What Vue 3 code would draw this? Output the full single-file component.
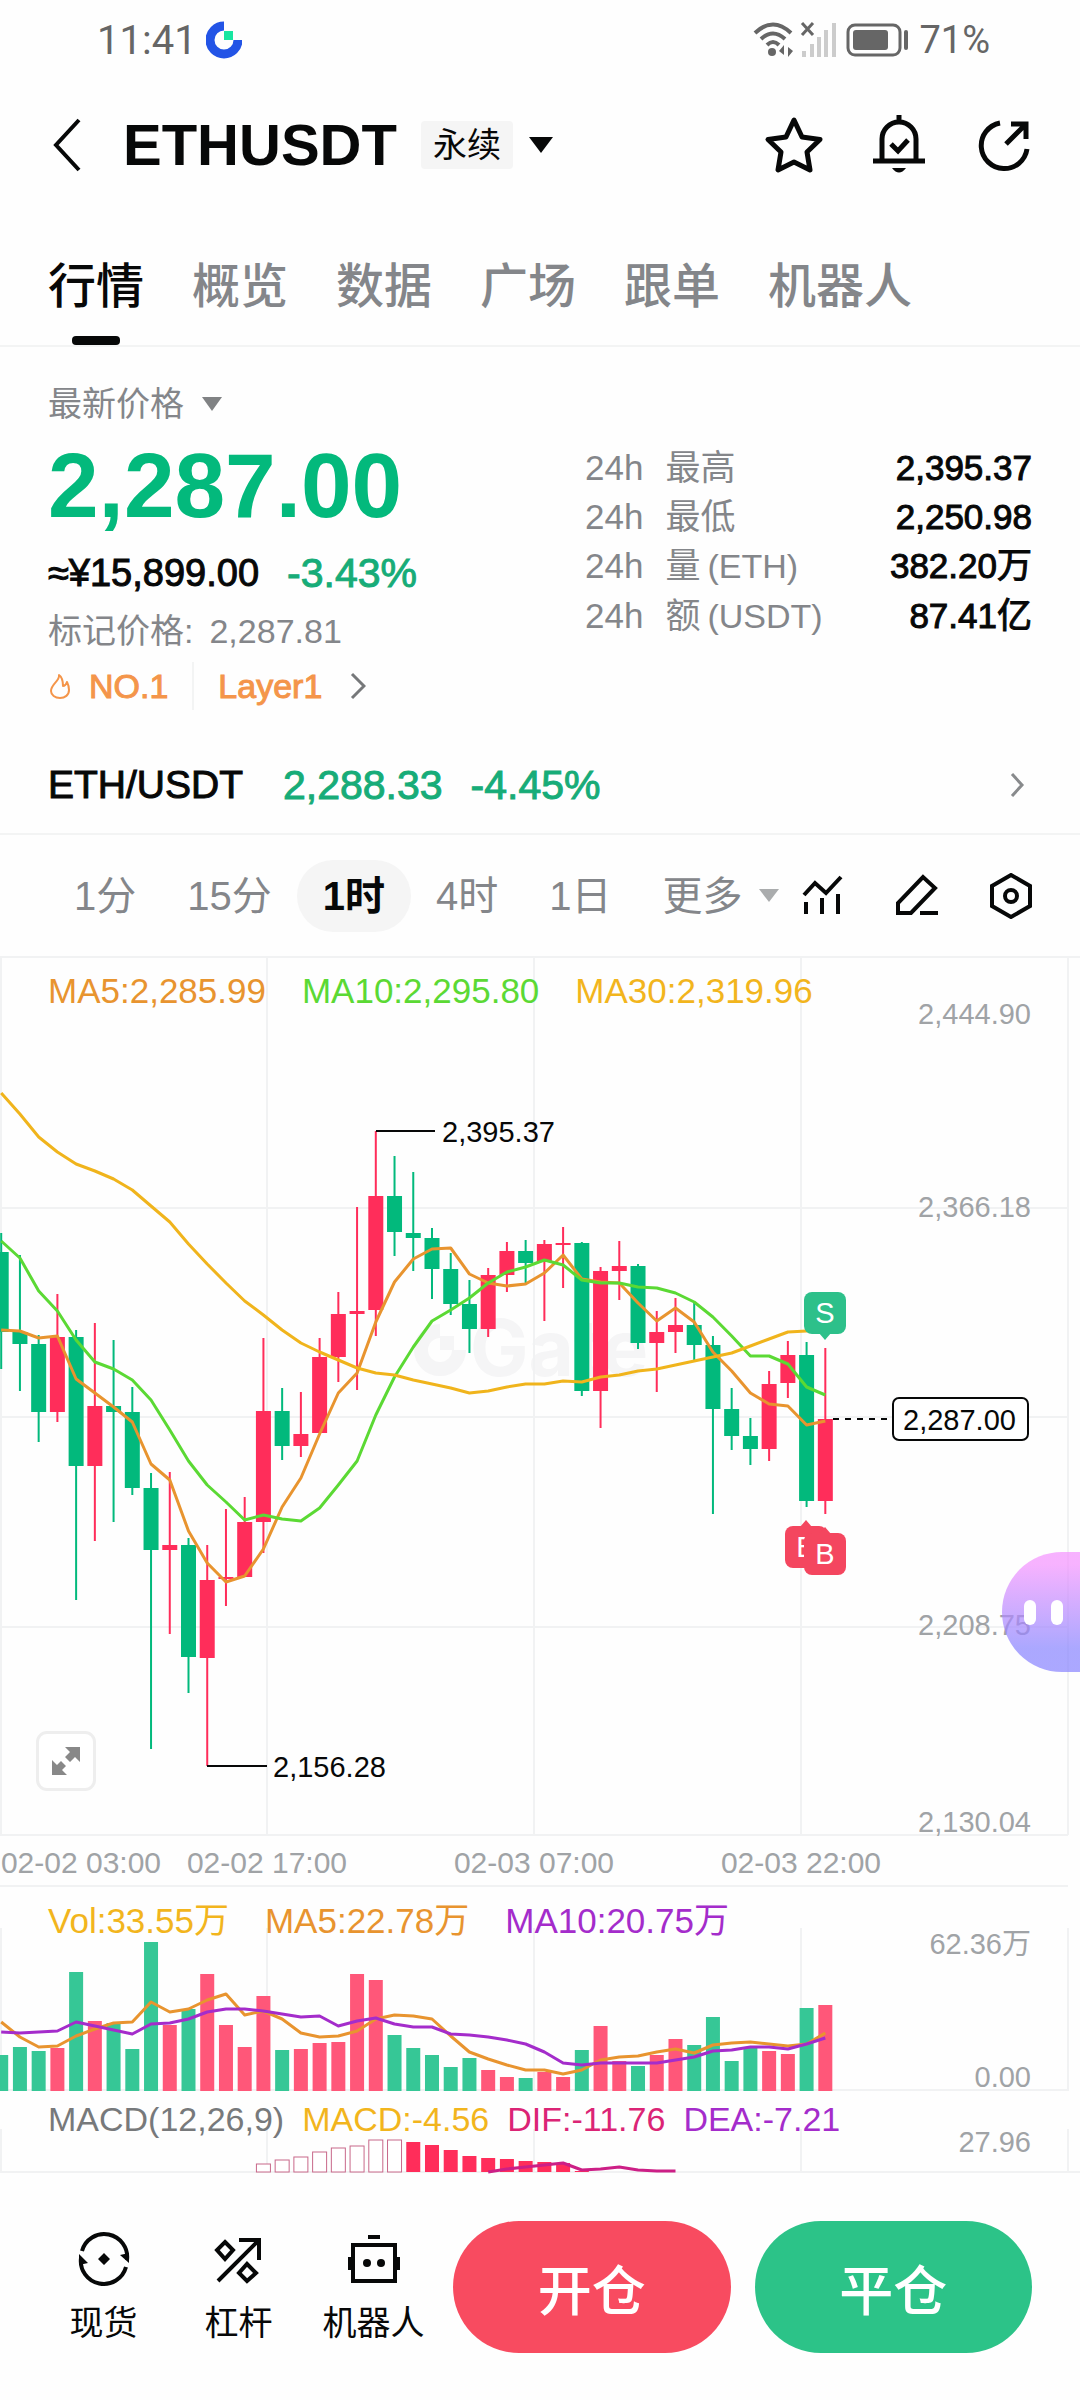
<script setup>
const tabs = ['行情', '概览', '数据', '广场', '跟单', '机器人']

const stats = [
  { name: '最高', unit: '', value: '2,395.37' },
  { name: '最低', unit: '', value: '2,250.98' },
  { name: '量', unit: '(ETH)', value: '382.20万' },
  { name: '额', unit: '(USDT)', value: '87.41亿' },
]

const periods = ['1分', '15分', '1时', '4时', '1日']

const STEP = 18.73
const cx = (i) => 1.2 + STEP * i
const toPoints = (values, first = 0) =>
  values.map((y, i) => `${cx(i + first).toFixed(1)},${y}`).join(' ')

// each candle: high, body top, body bottom, low, direction
const candles = [
  [277, 296, 376, 413, 'g'], [299, 376, 388, 435, 'g'], [379, 388, 456, 486, 'g'],
  [338, 381, 456, 466, 'r'], [374, 381, 510, 644, 'g'], [367, 450, 510, 585, 'r'],
  [384, 450, 456, 566, 'g'], [431, 456, 532, 539, 'g'], [517, 532, 594, 793, 'g'],
  [516, 589, 594, 678, 'r'], [582, 589, 701, 737, 'g'], [589, 624, 702, 810, 'r'],
  [553, 621, 623, 650, 'r'], [541, 566, 621, 621, 'r'], [382, 455, 566, 597, 'r'],
  [432, 455, 490, 504, 'g'], [436, 478, 490, 501, 'r'], [382, 401, 477, 477, 'r'],
  [336, 358, 401, 426, 'r'], [251, 355, 358, 434, 'r'], [175, 240, 354, 380, 'r'],
  [200, 240, 276, 300, 'g'], [216, 277, 282, 315, 'g'], [272, 282, 313, 343, 'g'],
  [297, 313, 348, 359, 'g'], [324, 348, 373, 397, 'g'], [312, 319, 373, 381, 'r'],
  [286, 295, 319, 336, 'r'], [284, 295, 307, 327, 'g'], [284, 288, 306, 365, 'r'],
  [271, 287, 289, 332, 'r'], [286, 287, 435, 440, 'g'], [311, 315, 435, 472, 'r'],
  [285, 310, 315, 344, 'r'], [308, 310, 387, 393, 'g'], [355, 376, 387, 436, 'r'],
  [342, 369, 376, 397, 'r'], [347, 369, 389, 404, 'g'], [380, 389, 453, 558, 'g'],
  [432, 453, 480, 494, 'g'], [462, 480, 493, 509, 'g'], [415, 428, 493, 505, 'r'],
  [385, 399, 427, 442, 'r'], [386, 399, 545, 551, 'g'], [392, 463, 545, 558, 'r'],
]

const ma5 = [374, 375, 382, 380, 423, 437, 451, 466, 508, 524, 575, 607, 626, 620, 593, 551, 522, 478, 437, 417, 366, 326, 303, 293, 292, 318, 327, 330, 328, 317, 299, 323, 326, 327, 347, 365, 352, 366, 396, 415, 437, 448, 450, 469, 465]
const ma10 = [285, 302, 335, 355, 384, 406, 413, 424, 444, 474, 505, 529, 546, 564, 559, 563, 565, 552, 529, 505, 459, 421, 391, 365, 354, 342, 327, 316, 311, 304, 309, 324, 327, 327, 331, 332, 337, 346, 361, 380, 400, 400, 408, 431, 439]
const ma30 = [137, 158, 181, 196, 208, 215, 223, 234, 250, 266, 288, 308, 327, 345, 359, 374, 387, 396, 404, 412, 417, 419, 424, 428, 432, 437, 435, 431, 428, 428, 425, 426, 421, 419, 415, 413, 409, 405, 401, 397, 390, 383, 376, 375, 375]

const volumes = [169, 161, 165, 162, 86, 135, 137, 163, 56, 139, 123, 88, 139, 161, 110, 164, 163, 157, 156, 88, 94, 149, 162, 169, 181, 172, 184, 191, 192, 186, 191, 164, 140, 175, 180, 169, 153, 159, 131, 175, 162, 165, 168, 122, 119]
const volumeColors = 'gggrgrgggrgrrrrgrrrrrgggggrrgrrgrrgrrggggrrgr'
const volMa5 = [136, 151, 161, 160, 150, 143, 137, 136, 116, 126, 123, 114, 108, 129, 125, 133, 147, 151, 150, 145, 133, 129, 130, 133, 150, 166, 173, 179, 184, 184, 188, 184, 174, 171, 170, 166, 163, 167, 159, 157, 156, 158, 160, 158, 147]
const volMa10 = [146, 147, 146, 145, 136, 140, 144, 148, 138, 137, 133, 126, 123, 123, 125, 128, 131, 130, 140, 135, 132, 138, 141, 141, 148, 149, 151, 154, 158, 166, 177, 179, 177, 177, 177, 177, 174, 171, 165, 164, 161, 161, 163, 158, 152]

const macdHollow = [73, 69, 66, 61, 57, 55, 49, 49]
const macdSolid = [51, 54, 59, 65, 67, 68, 70, 71, 72, 80]
const macdLine = [81, 78, 76, 74, 72, 79, 78, 76, 79, 80, 80]

const gridX = [1, 267, 534, 801, 1068]
const gridY = [1, 252, 461, 671, 879, 930]
const prices = [
  { y: 68, text: '2,444.90' },
  { y: 261, text: '2,366.18' },
  { y: 679, text: '2,208.75' },
  { y: 876, text: '2,130.04' },
]
const dates = [
  { x: 81, text: '02-02 03:00' },
  { x: 267, text: '02-02 17:00' },
  { x: 534, text: '02-03 07:00' },
  { x: 801, text: '02-03 22:00' },
]
</script>

<template>
  <div class="app">
    <div class="status">
      <div class="status-side">
        <span class="clock">11:41</span>
        <svg width="36" height="38" viewBox="0 0 36 38">
          <path d="M18 5A14 14 0 1 0 32 19" fill="none" stroke="#2354e6" stroke-width="9" />
          <rect x="18" y="10" width="9" height="9" fill="#17e6a1" />
        </svg>
      </div>
      <div class="status-side">
        <svg width="84" height="38" viewBox="0 0 84 38">
          <g fill="none" stroke="#666" stroke-width="4">
            <path d="M2 12Q20-5 38 12" />
            <path d="M8 18Q20 7 32 18" />
            <path d="M14 24Q20 18 26 24" />
          </g>
          <circle cx="19" cy="31" r="4" fill="#666" />
          <path d="M31 24v10l-5-4zM35 36V26l5 4z" fill="#666" />
          <path d="M49 2l11 12M60 2L49 14" stroke="#666" stroke-width="3" />
          <g fill="#ccc">
            <rect x="49" y="30" width="4" height="6" /><rect x="57" y="23" width="4" height="13" />
            <rect x="64" y="16" width="4" height="20" /><rect x="71" y="9" width="4" height="27" />
            <rect x="79" y="2" width="4" height="34" />
          </g>
        </svg>
        <svg width="64" height="34" viewBox="0 0 64 34">
          <rect x="2" y="2" width="52" height="30" rx="7" fill="none" stroke="#666" stroke-width="3" />
          <rect x="7" y="7" width="35" height="20" rx="3" fill="#666" />
          <path d="M60 9v16" stroke="#666" stroke-width="4" stroke-linecap="round" />
        </svg>
        <span class="charge">71%</span>
      </div>
    </div>

    <header class="header">
      <button class="back" aria-label="返回">
        <svg width="30" height="54" viewBox="0 0 30 54"><path d="M27 2L4 27l23 25" fill="none" stroke="#070808" stroke-width="4" /></svg>
      </button>
      <h1>ETHUSDT</h1>
      <button class="kind">
        <span class="badge">永续</span>
        <svg width="24" height="16" viewBox="0 0 24 16"><path d="M0 0h24L12 16z" fill="#070808" /></svg>
      </button>
      <div class="actions">
        <button aria-label="收藏">
          <svg width="60" height="60" viewBox="0 0 60 60"><path d="M30 5l8 17 18 2.500-13 12.500 3 18-16-8-16 8 3-18L4 24.500 22 22z" fill="none" stroke="#070808" stroke-width="5" stroke-linejoin="round" /></svg>
        </button>
        <button aria-label="提醒">
          <svg width="60" height="60" viewBox="0 0 60 60">
            <path d="M13 46V24a17 17 0 0 1 34 0v22M30 0v8M4 46h52M22 29l7 7 10-11" fill="none" stroke="#070808" stroke-width="5" />
            <path d="M23 53h14q-7 9-14 0z" fill="#070808" />
          </svg>
        </button>
        <button aria-label="分享">
          <svg width="60" height="60" viewBox="0 0 60 60">
            <path d="M26 8A23 23 0 1 0 53 34M32 29L51 10M37 9h15v15" fill="none" stroke="#070808" stroke-width="5" />
          </svg>
        </button>
      </div>
    </header>

    <nav class="tabs">
      <a v-for="(tab, i) in tabs" :key="tab" href="#" :class="{ active: i === 0 }">{{ tab }}</a>
    </nav>

    <section class="quote">
      <div class="quote-main">
        <button class="price-kind">
          最新价格
          <svg width="20" height="14" viewBox="0 0 20 14"><path d="M0 0h20L10 14z" fill="#808284" /></svg>
        </button>
        <div class="last">2,287.00</div>
        <div class="approx"><span>≈¥15,899.00</span><b>-3.43%</b></div>
        <div class="mark"><span>标记价格:</span><span>2,287.81</span></div>
        <a class="tags" href="#">
          <svg width="24" height="28" viewBox="0 0 24 28"><path d="M11 3c1 6-8 9-8 16 0 4 4 7 9 7s9-3 9-8c0-3-1-6-2-8-1 3-2 4-4 4 0-5-1-9-4-11z" fill="none" stroke="#f4954a" stroke-width="2" stroke-linejoin="round" /></svg>
          <span class="rank">NO.1</span>
          <span class="layer">Layer1</span>
          <svg width="16" height="28" viewBox="0 0 16 28"><path d="M2 2l12 12L2 26" fill="none" stroke="#76787a" stroke-width="3" /></svg>
        </a>
      </div>
      <dl class="stats">
        <div v-for="s in stats" :key="s.name">
          <dt><span class="span24">24h</span>{{ s.name }}<small v-if="s.unit">{{ s.unit }}</small></dt>
          <dd>{{ s.value }}</dd>
        </div>
      </dl>
    </section>

    <a class="spot" href="#">
      <span class="pair">ETH/USDT</span>
      <span class="spot-price">2,288.33</span>
      <span class="spot-change">-4.45%</span>
      <svg width="16" height="24" viewBox="0 0 16 24"><path d="M3 1l10 11L3 23" fill="none" stroke="#888a8c" stroke-width="3" /></svg>
    </a>

    <div class="toolbar">
      <div class="periods">
        <button v-for="p in periods" :key="p" :class="{ active: p === '1时' }">{{ p }}</button>
        <button class="more">
          更多
          <svg width="20" height="13" viewBox="0 0 20 13"><path d="M0 0h20L10 13z" fill="#aaacad" /></svg>
        </button>
      </div>
      <div class="tools">
        <button aria-label="指标">
          <svg width="46" height="46" viewBox="0 0 46 46"><path d="M4 22L15 10l11 10L41 4M6 29v12M22 25v16M38 21v20" fill="none" stroke="#070808" stroke-width="4" /></svg>
        </button>
        <button aria-label="画线">
          <svg width="46" height="46" viewBox="0 0 46 46"><path d="M4 40V30L29 4l12 11-24 25zM26 40h18" fill="none" stroke="#070808" stroke-width="4" /></svg>
        </button>
        <button aria-label="设置">
          <svg width="46" height="46" viewBox="0 0 46 46">
            <path d="M23 2l19 11v20L23 44 4 33V13z" fill="none" stroke="#070808" stroke-width="4" />
            <circle cx="23" cy="23" r="6" fill="none" stroke="#070808" stroke-width="4" />
          </svg>
        </button>
      </div>
    </div>

    <main>
      <section class="panel">
        <svg class="plot" viewBox="0 0 1080 930">
          <g class="watermark">
            <path d="M440 375A19 19 0 1 0 459 394" fill="none" stroke="#f5f5f6" stroke-width="14" />
            <rect x="440" y="380" width="14" height="14" />
            <text x="470" y="420">Gate</text>
          </g>
          <g class="grid">
            <path v-for="x in gridX" :key="x" :d="`M${x} 0V879`" />
            <path v-for="y in gridY" :key="y" :d="`M0 ${y}H1068`" />
            <path d="M0 1H1080" />
          </g>
          <g v-for="(c, i) in candles" :key="i" :class="c[4] === 'g' ? 'down' : 'up'">
            <rect :x="cx(i) - 1" :y="c[0]" width="2" :height="c[3] - c[0]" />
            <rect :x="cx(i) - 7.5" :y="c[1]" width="15" :height="c[2] - c[1]" />
          </g>
          <polyline class="line" stroke="#e8942f" :points="toPoints(ma5)" />
          <polyline class="line" stroke="#5bd934" :points="toPoints(ma10)" />
          <polyline class="line" stroke="#f0b41c" :points="toPoints(ma30)" />
          <path class="rule" d="M376 175H435M207 810H267" />
          <text class="tick dark" x="442" y="186">2,395.37</text>
          <text class="tick dark" x="273" y="821">2,156.28</text>
          <g class="sell">
            <path d="M819 377h12l-6 7z" />
            <rect x="804" y="336" width="42" height="42" rx="8" />
            <text x="825" y="367">S</text>
          </g>
          <g class="buy">
            <path d="M800 571h12l-6-7z" />
            <rect x="785" y="570" width="42" height="42" rx="8" />
            <text x="806" y="601">B</text>
          </g>
          <g class="buy">
            <path d="M819 578h12l-6-7z" />
            <rect x="804" y="577" width="42" height="42" rx="8" />
            <text x="825" y="608">B</text>
          </g>
          <path class="rule" d="M833 463H892" stroke-dasharray="6 6" />
          <rect x="893" y="442" width="135" height="42" rx="6" fill="#fff" stroke="#070808" stroke-width="2" />
          <text class="tick dark" x="903" y="474">2,287.00</text>
          <text v-for="p in prices" :key="p.y" class="tick end" x="1031" :y="p.y">{{ p.text }}</text>
          <text v-for="d in dates" :key="d.x" class="date" :x="d.x" y="917">{{ d.text }}</text>
        </svg>
        <div class="legend">
          <span class="orange">MA5:2,285.99</span>
          <span class="green">MA10:2,295.80</span>
          <span class="yellow">MA30:2,319.96</span>
        </div>
        <button class="expand" aria-label="全屏">
          <svg width="30" height="30" viewBox="0 0 30 30">
            <path d="M14 1h15v15l-5-5-5 5-5-5 5-5zM1 14l5 5 4-4 5 5-4 4 5 5H1z" fill="#888" />
          </svg>
        </button>
        <button class="robot" aria-label="助手"><i></i><i></i></button>
      </section>

      <section class="panel">
        <svg class="plot" viewBox="0 0 1080 205">
          <g class="grid">
            <path v-for="x in gridX" :key="x" :d="`M${x} 42V205`" />
            <path d="M0 204H1068" />
          </g>
          <rect
            v-for="(v, i) in volumes" :key="i"
            :class="volumeColors[i] === 'g' ? 'vol-down' : 'vol-up'"
            :x="cx(i) - 7" :y="v" width="14" :height="205 - v"
          />
          <polyline class="line" stroke="#e8942f" :points="toPoints(volMa5)" />
          <polyline class="line" stroke="#a42ccb" :points="toPoints(volMa10)" />
          <text class="tick end" x="1031" y="68">62.36万</text>
          <text class="tick end" x="1031" y="201">0.00</text>
        </svg>
        <div class="legend">
          <span class="yellow">Vol:33.55万</span>
          <span class="orange">MA5:22.78万</span>
          <span class="purple">MA10:20.75万</span>
        </div>
      </section>

      <section class="panel">
        <svg class="plot" viewBox="0 0 1080 82">
          <g class="grid">
            <path v-for="x in gridX" :key="x" :d="`M${x} 38V82`" />
            <path d="M0 81H1080" />
          </g>
          <rect
            v-for="(y, i) in macdHollow" :key="i"
            class="hollow" :x="cx(i + 14) - 7" :y="y" width="14" :height="81 - y"
          />
          <rect
            v-for="(y, i) in macdSolid" :key="i"
            class="up" :x="cx(i + 22) - 7" :y="y" width="14" :height="81 - y"
          />
          <polyline class="line" stroke="#cc1f86" :points="toPoints(macdLine, 26)" />
          <text class="tick end" x="1031" y="61">27.96</text>
        </svg>
        <div class="legend tight">
          <span class="gray">MACD(12,26,9)</span>
          <span class="yellow">MACD:-4.56</span>
          <span class="pink">DIF:-11.76</span>
          <span class="purple">DEA:-7.21</span>
        </div>
      </section>
    </main>

    <footer class="bar">
      <a class="entry" href="#">
        <svg width="54" height="54" viewBox="0 0 54 54">
          <path d="M5 19A23 23 0 0 1 50 28M49 35A23 23 0 0 1 4 26" fill="none" stroke="#070808" stroke-width="4" />
          <path d="M43 23l9-2v10zM11 31l-9 2V22zM27 21l6 6-6 6-6-6z" fill="#070808" />
        </svg>
        <span>现货</span>
      </a>
      <a class="entry" href="#">
        <svg width="54" height="54" viewBox="0 0 54 54">
          <path d="M6 49L46 9M27 8h20v20M13 10l8 8-8 9-8-9zM35 32l9 9-9 8-8-8z" fill="none" stroke="#070808" stroke-width="4" />
        </svg>
        <span>杠杆</span>
      </a>
      <a class="entry" href="#">
        <svg width="54" height="54" viewBox="0 0 54 54">
          <path d="M6 13h42v36H6zM21 5h12M3 25v13M51 25v13" fill="none" stroke="#070808" stroke-width="4" />
          <circle cx="20" cy="31" r="4" fill="#070808" /><circle cx="34" cy="31" r="4" fill="#070808" />
        </svg>
        <span>机器人</span>
      </a>
      <div class="orders">
        <button class="open">开仓</button>
        <button class="close">平仓</button>
      </div>
    </footer>
  </div>
</template>

<style>
body {
  margin: 0;
  background: #fefefe;
}
</style>

<style scoped>
.app {
  font-family: "Liberation Sans", "Noto Sans CJK SC", sans-serif;
  font-size: 34px;
  color: #070808;
  background: #fefefe;
}
.app * {
  box-sizing: border-box;
}
svg {
  display: block;
  flex: none;
}
button {
  padding: 0;
  border: 0;
  background: none;
  font: inherit;
  color: inherit;
}
a {
  color: inherit;
  text-decoration: none;
}

.status {
  display: flex;
  justify-content: space-between;
  height: 80px;
  padding: 0 90px 0 97px;
  font-family: Roboto, sans-serif;
  color: #666;
}
.status-side {
  display: flex;
  align-items: center;
  gap: 9px;
}
.clock {
  font-size: 40px;
}
.charge {
  font-size: 38px;
}

.header {
  display: flex;
  align-items: center;
  height: 130px;
  padding: 0 46px 0 52px;
}
h1 {
  margin: 0 24px 0 41px;
  font-size: 58px;
  line-height: 64px;
}
.kind {
  display: flex;
  align-items: center;
  gap: 16px;
}
.badge {
  padding: 0 12px;
  line-height: 48px;
  background: #f5f5f5;
  border-radius: 4px;
}
.actions {
  display: flex;
  gap: 45px;
  margin-left: auto;
}

.tabs {
  display: flex;
  gap: 48px;
  height: 137px;
  padding: 0 48px;
  border-bottom: 2px solid #f3f4f4;
  font-size: 48px;
  font-weight: 500;
  line-height: 154px;
  color: #84868a;
}
.tabs a {
  position: relative;
  white-space: nowrap;
}
.tabs .active {
  color: #070808;
}
.tabs .active::after {
  content: "";
  position: absolute;
  bottom: 0;
  left: 24px;
  width: 48px;
  height: 9px;
  border-radius: 4px;
  background: #070808;
}

.quote {
  display: flex;
  justify-content: space-between;
  padding: 33px 48px 0;
  line-height: 48px;
}
.quote-main {
  display: flex;
  flex-direction: column;
  align-items: flex-start;
}
.price-kind {
  display: flex;
  align-items: center;
  gap: 18px;
  color: #84868a;
}
.last {
  margin-top: 10px;
  font-size: 91px;
  font-weight: 700;
  line-height: 96px;
  color: #03b97c;
}
.approx {
  display: flex;
  gap: 28px;
  margin-top: 15px;
  font-size: 38px;
  -webkit-text-stroke: 1px;
}
.approx b {
  font-size: 41px;
  font-weight: 400;
  color: #17ac78;
}
.mark {
  display: flex;
  gap: 16px;
  margin-top: 10px;
  color: #84868a;
}
.tags {
  display: flex;
  align-items: center;
  margin-top: 7px;
  color: #f4954a;
  -webkit-text-stroke: 1px;
}
.rank {
  margin: 0 24px 0 17px;
}
.layer {
  margin-right: 28px;
  padding-left: 24px;
  border-left: 2px solid #f3f4f4;
}
.stats {
  flex: none;
  width: 447px;
  margin: 63px 0 0;
  font-size: 35px;
  line-height: 49px;
}
.stats div {
  display: flex;
  justify-content: space-between;
}
.stats dt {
  color: #84868a;
}
.stats dd {
  margin: 0;
  -webkit-text-stroke: 1px;
}
.span24 {
  margin-right: 22px;
}
.stats small {
  margin-left: 7px;
  font-size: 34px;
}

.spot {
  display: flex;
  align-items: center;
  height: 100px;
  margin-top: 25px;
  padding: 2px 55px 0 48px;
  border-bottom: 2px solid #f3f4f4;
  font-size: 41px;
  line-height: 48px;
  -webkit-text-stroke: 1px;
}
.pair {
  font-size: 39px;
  margin-right: 40px;
}
.spot-price,
.spot-change {
  margin-right: 28px;
  color: #17ac78;
}
.spot svg {
  margin-left: auto;
}

.toolbar {
  display: flex;
  align-items: center;
  justify-content: space-between;
  height: 121px;
  padding: 0 46px 0 74px;
}
.periods {
  display: flex;
  gap: 51px;
  font-size: 40px;
  line-height: 72px;
  color: #84868a;
}
.periods button {
  white-space: nowrap;
}
.periods .active {
  margin: 0 -26px;
  padding: 0 26px;
  border-radius: 36px;
  background: #f5f5f5;
  font-weight: 700;
  color: #070808;
}
.periods .more {
  display: flex;
  align-items: center;
  gap: 16px;
}
.tools {
  display: flex;
  gap: 48px;
}

.panel {
  position: relative;
}
.plot {
  width: 100%;
  height: auto;
  overflow: visible;
}
.grid path {
  stroke: #f1f2f3;
  stroke-width: 2;
}
.watermark {
  fill: #f5f5f6;
  font: 700 78px Inter, sans-serif;
}
.up {
  fill: #ff2d5a;
}
.down {
  fill: #02b97c;
}
.vol-up {
  fill: #ff5779;
}
.vol-down {
  fill: #36c796;
}
.hollow {
  fill: #fff;
  stroke: #c8688a;
  stroke-width: 1;
}
.line {
  fill: none;
  stroke-width: 3;
  stroke-linejoin: round;
}
.rule {
  stroke: #070808;
  stroke-width: 2;
}
.tick {
  font-size: 29px;
  fill: #a0a3a6;
}
.dark {
  fill: #070808;
}
.end {
  text-anchor: end;
}
.date {
  font-size: 30px;
  fill: #a0a3a6;
  text-anchor: middle;
}
.sell,
.buy {
  font-size: 29px;
  text-anchor: middle;
}
.sell {
  fill: #2dc08a;
}
.buy {
  fill: #f4465f;
}
.sell text,
.buy text {
  fill: #fff;
}
.legend {
  position: absolute;
  top: 11px;
  left: 48px;
  display: flex;
  gap: 36px;
  font-size: 35px;
  line-height: 48px;
  white-space: nowrap;
}
.tight {
  top: 4px;
  gap: 18px;
  font-size: 34px;
}
.orange {
  color: #e8942f;
}
.green {
  color: #5bd934;
}
.yellow {
  color: #f2b51d;
}
.purple {
  color: #a42ccb;
}
.pink {
  color: #db2475;
}
.gray {
  color: #77797b;
}
.expand {
  position: absolute;
  left: 36px;
  bottom: 95px;
  display: flex;
  align-items: center;
  justify-content: center;
  width: 60px;
  height: 60px;
  border: 3px solid #eee;
  border-radius: 11px;
  background: #fff;
}
.robot {
  position: absolute;
  top: 596px;
  right: 0;
  display: flex;
  align-items: center;
  gap: 15px;
  width: 78px;
  height: 120px;
  padding-left: 22px;
  border-radius: 60px 0 0 60px;
  background: linear-gradient(rgba(244, 146, 255, 0.7) 10%, rgba(136, 131, 255, 0.7) 80%);
}
.robot i {
  width: 12px;
  height: 25px;
  border-radius: 6px;
  background: #fff;
}

.bar {
  display: flex;
  align-items: center;
  height: 228px;
  padding: 0 48px 0 36px;
}
.entry {
  display: flex;
  flex: none;
  flex-direction: column;
  align-items: center;
  gap: 17px;
  width: 135px;
  line-height: 40px;
  white-space: nowrap;
}
.orders {
  display: flex;
  flex: 1;
  gap: 24px;
  margin-left: 12px;
}
.orders button {
  flex: 1;
  height: 132px;
  border-radius: 66px;
  font-size: 54px;
  font-weight: 500;
  color: #fff;
}
.open {
  background: #f84b60;
}
.close {
  background: #2cc388;
}
</style>
